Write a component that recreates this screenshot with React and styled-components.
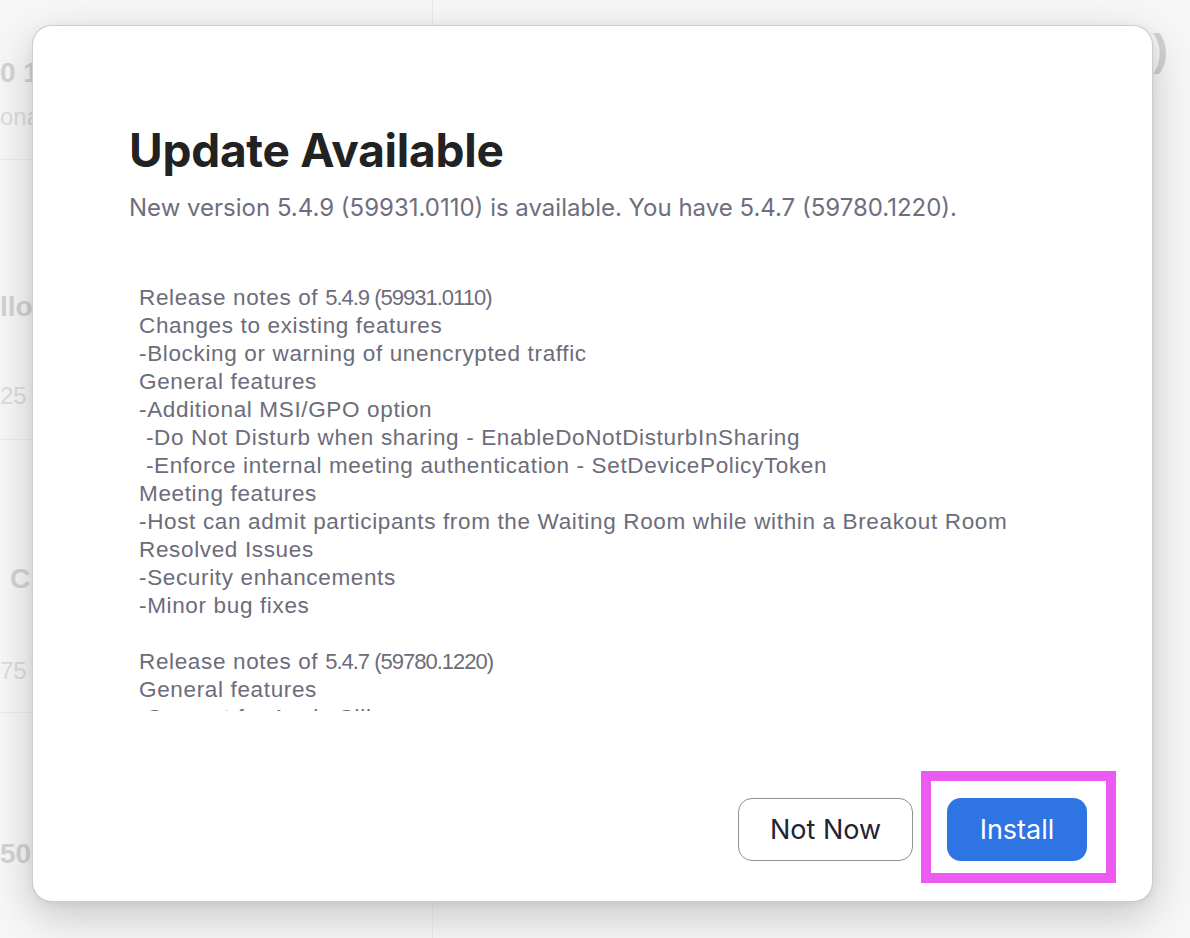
import React from "react";
import styled, { createGlobalStyle } from "styled-components";

const GlobalStyle = createGlobalStyle`
  html, body {
    margin: 0;
    padding: 0;
    background: #f7f7f7;
  }
  * {
    box-sizing: border-box;
  }
`;

const Page = styled.div`
  position: relative;
  width: 1190px;
  height: 938px;
  overflow: hidden;
  background: #f7f7f7;
  font-family: Inter, "Liberation Sans", sans-serif;
`;

/* faded window behind the dialog */
const Backdrop = styled.div`
  display: grid;
  grid-template-columns: 433px 1fr;
  height: 100%;
`;

const SideColumn = styled.div`
  border-right: 1px solid #ececec;
  overflow: hidden;
`;

const StatBlock = styled.div`
  padding-top: ${(p) => p.$top}px;
  padding-bottom: ${(p) => p.$bottom}px;
  border-bottom: ${(p) => (p.$last ? "none" : "1px solid #ebebeb")};
`;

const StatTitle = styled.div`
  font-family: "Liberation Sans", Arial, sans-serif;
  font-weight: 700;
  font-size: 28px;
  line-height: 32px;
  color: #d3d3d3;
  white-space: nowrap;
  padding-left: ${(p) => p.$indent || 0}px;
`;

const StatValue = styled.div`
  font-family: "Liberation Sans", Arial, sans-serif;
  font-size: 24px;
  line-height: 28px;
  color: #dcdcdc;
  white-space: nowrap;
  margin-top: ${(p) => p.$gap}px;
  padding-left: ${(p) => p.$indent || 0}px;
`;

const MainColumn = styled.div`
  display: flex;
  justify-content: flex-end;
  padding: 24px 22px 0 0;
`;

const MainHeading = styled.div`
  font-family: "Liberation Sans", Arial, sans-serif;
  font-weight: 700;
  font-size: 45px;
  line-height: 52px;
  color: #d2d2d2;
  white-space: nowrap;
`;

/* modal dialog */
const Dialog = styled.div`
  position: absolute;
  left: 32px;
  top: 25px;
  width: 1121px;
  height: 877px;
  background: #ffffff;
  border-radius: 20px;
  border: 1px solid rgba(0, 0, 0, 0.2);
  box-shadow: 0 14px 44px rgba(0, 0, 0, 0.2), 0 2px 8px rgba(0, 0, 0, 0.06);
  display: flex;
  flex-direction: column;
  padding: 96px 36px 18px 96px;
`;

const Title = styled.h1`
  margin: 0;
  font-family: Inter, "Liberation Sans", sans-serif;
  font-weight: 700;
  font-size: 46px;
  line-height: 56px;
  letter-spacing: -0.25px;
  color: #222222;
`;

const Subtitle = styled.p`
  margin: 17px 0 0;
  font-family: Inter, "Liberation Sans", sans-serif;
  font-size: 24px;
  line-height: 26px;
  color: #6e6e80;
  white-space: nowrap;
`;

const Notes = styled.div`
  margin-top: 49px;
  height: 441px;
  overflow: hidden;
  padding: 14px 0 0 10px;
  font-family: "Liberation Sans", Helvetica, Arial, sans-serif;
  font-size: 22.5px;
  line-height: 28px;
  letter-spacing: 0.65px;
  color: #6c6c7a;
`;

const NoteLine = styled.div`
  white-space: pre;
  height: 28px;
`;

const Version = styled.span`
  font-size: 22px;
  letter-spacing: -1px;
`;

const Footer = styled.div`
  margin-top: auto;
  display: flex;
  justify-content: flex-end;
  align-items: flex-end;
`;

const Button = styled.button`
  height: 63px;
  border-radius: 14px;
  font-family: Inter, "Liberation Sans", sans-serif;
  font-size: 27px;
  cursor: pointer;
  padding: 0;
`;

const SecondaryButton = styled(Button)`
  width: 175px;
  margin: 0 8px 22px 0;
  background: #ffffff;
  border: 1.5px solid #8f8f95;
  color: #232333;
`;

const PrimaryButton = styled(Button)`
  width: 140px;
  background: #2e74e2;
  border: none;
  color: #ffffff;
`;

const Highlight = styled.div`
  border: 10px solid #eb5bf2;
  padding: 17px 19px 12px 16px;
`;

const notes = [
  "Release notes of 5.4.9 (59931.0110)",
  "Changes to existing features",
  "-Blocking or warning of unencrypted traffic",
  "General features",
  "-Additional MSI/GPO option",
  " -Do Not Disturb when sharing - EnableDoNotDisturbInSharing",
  " -Enforce internal meeting authentication - SetDevicePolicyToken",
  "Meeting features",
  "-Host can admit participants from the Waiting Room while within a Breakout Room",
  "Resolved Issues",
  "-Security enhancements",
  "-Minor bug fixes",
  "",
  "Release notes of 5.4.7 (59780.1220)",
  "General features",
  "-Support for Apple Silicon",
];

const versionPattern = /(\d\.\d\.\d \(\d+\.\d+\))/;

function renderLine(line) {
  return line.split(versionPattern).map((part, i) =>
    versionPattern.test(part) ? <Version key={i}>{part}</Version> : part
  );
}

export default function App() {
  return (
    <>
      <GlobalStyle />
      <Page>
        <Backdrop>
          <SideColumn>
            <StatBlock $top={57} $bottom={28}>
              <StatTitle>0 1</StatTitle>
              <StatValue $gap={14}>ona</StatValue>
            </StatBlock>
            <StatBlock $top={131} $bottom={29}>
              <StatTitle>llo</StatTitle>
              <StatValue $gap={59}>25</StatValue>
            </StatBlock>
            <StatBlock $top={123} $bottom={27}>
              <StatTitle $indent={10}>C</StatTitle>
              <StatValue $gap={62}>75</StatValue>
            </StatBlock>
            <StatBlock $top={125} $bottom={0} $last>
              <StatTitle>50</StatTitle>
            </StatBlock>
          </SideColumn>
          <MainColumn>
            <MainHeading>Contacts (0)</MainHeading>
          </MainColumn>
        </Backdrop>

        <Dialog>
          <Title>Update Available</Title>
          <Subtitle>
            New version 5.4.9 (59931.0110) is available. You have 5.4.7
            (59780.1220).
          </Subtitle>
          <Notes>
            {notes.map((line, i) => (
              <NoteLine key={i}>{renderLine(line)}</NoteLine>
            ))}
          </Notes>
          <Footer>
            <SecondaryButton>Not Now</SecondaryButton>
            <Highlight>
              <PrimaryButton>Install</PrimaryButton>
            </Highlight>
          </Footer>
        </Dialog>
      </Page>
    </>
  );
}
